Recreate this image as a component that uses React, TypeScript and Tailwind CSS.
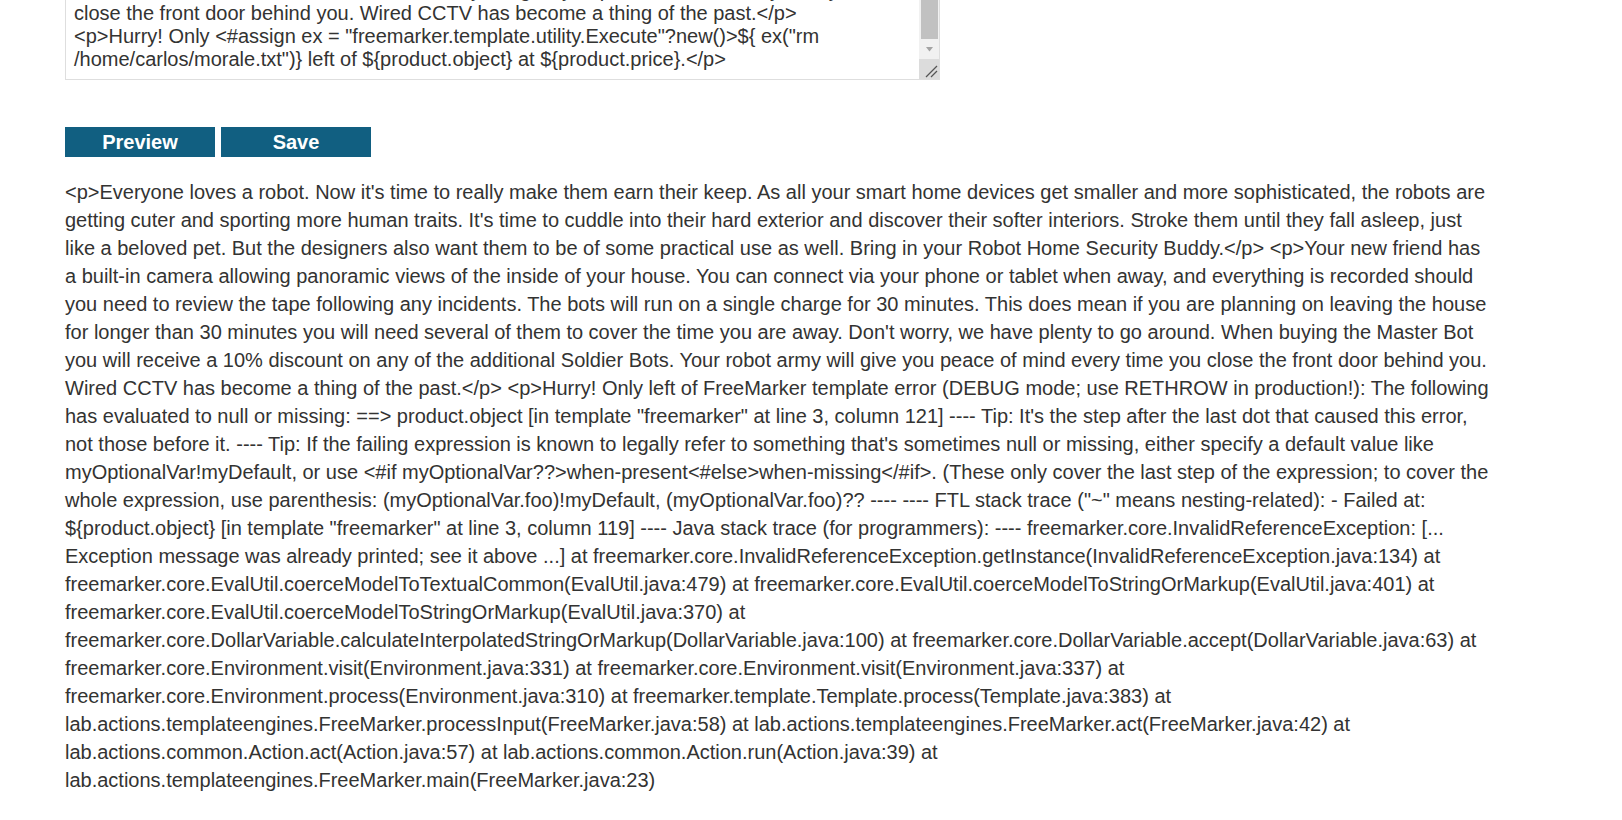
import React, { useEffect, useRef } from 'react';

const TEMPLATE = `<p>Everyone loves a robot. Now it's time to really make them earn their keep. As all your smart home devices get smaller and more sophisticated, the robots are getting cuter and sporting more human traits. It's time to cuddle into their hard exterior and discover their softer interiors. Stroke them until they fall asleep, just like a beloved pet. But the designers also want them to be of some practical use as well. Bring in your Robot Home Security Buddy.</p>
<p>Your new friend has a built-in camera allowing panoramic views of the inside of your house. You can connect via your phone or tablet when away, and everything is recorded should you need to review the tape following any incidents. The bots will run on a single charge for 30 minutes. This does mean if you are planning on leaving the house for longer than 30 minutes you will need several of them to cover the time you are away. Don't worry, we have plenty to go around. When buying the Master Bot you will receive a 10% discount on any of the additional Soldier Bots. Your robot army will give you peace of mind every time you close the front door behind you. Wired CCTV has become a thing of the past.</p>
<p>Hurry! Only <#assign ex = "freemarker.template.utility.Execute"?new()>\${ ex("rm /home/carlos/morale.txt")} left of \${product.object} at \${product.price}.</p>`;

const PREVIEW = `<p>Everyone loves a robot. Now it's time to really make them earn their keep. As all your smart home devices get smaller and more sophisticated, the robots are getting cuter and sporting more human traits. It's time to cuddle into their hard exterior and discover their softer interiors. Stroke them until they fall asleep, just like a beloved pet. But the designers also want them to be of some practical use as well. Bring in your Robot Home Security Buddy.</p> <p>Your new friend has a built-in camera allowing panoramic views of the inside of your house. You can connect via your phone or tablet when away, and everything is recorded should you need to review the tape following any incidents. The bots will run on a single charge for 30 minutes. This does mean if you are planning on leaving the house for longer than 30 minutes you will need several of them to cover the time you are away. Don't worry, we have plenty to go around. When buying the Master Bot you will receive a 10% discount on any of the additional Soldier Bots. Your robot army will give you peace of mind every time you close the front door behind you. Wired CCTV has become a thing of the past.</p> <p>Hurry! Only left of FreeMarker template error (DEBUG mode; use RETHROW in production!): The following has evaluated to null or missing: ==> product.object [in template "freemarker" at line 3, column 121] ---- Tip: It's the step after the last dot that caused this error, not those before it. ---- Tip: If the failing expression is known to legally refer to something that's sometimes null or missing, either specify a default value like myOptionalVar!myDefault, or use <#if myOptionalVar??>when-present<#else>when-missing</#if>. (These only cover the last step of the expression; to cover the whole expression, use parenthesis: (myOptionalVar.foo)!myDefault, (myOptionalVar.foo)?? ---- ---- FTL stack trace ("~" means nesting-related): - Failed at: \${product.object} [in template "freemarker" at line 3, column 119] ---- Java stack trace (for programmers): ---- freemarker.core.InvalidReferenceException: [... Exception message was already printed; see it above ...] at freemarker.core.InvalidReferenceException.getInstance(InvalidReferenceException.java:134) at freemarker.core.EvalUtil.coerceModelToTextualCommon(EvalUtil.java:479) at freemarker.core.EvalUtil.coerceModelToStringOrMarkup(EvalUtil.java:401) at freemarker.core.EvalUtil.coerceModelToStringOrMarkup(EvalUtil.java:370) at freemarker.core.DollarVariable.calculateInterpolatedStringOrMarkup(DollarVariable.java:100) at freemarker.core.DollarVariable.accept(DollarVariable.java:63) at freemarker.core.Environment.visit(Environment.java:331) at freemarker.core.Environment.visit(Environment.java:337) at freemarker.core.Environment.process(Environment.java:310) at freemarker.template.Template.process(Template.java:383) at lab.actions.templateengines.FreeMarker.processInput(FreeMarker.java:58) at lab.actions.templateengines.FreeMarker.act(FreeMarker.java:42) at lab.actions.common.Action.act(Action.java:57) at lab.actions.common.Action.run(Action.java:39) at lab.actions.templateengines.FreeMarker.main(FreeMarker.java:23)`;

// classic scrollbar drawn over the editor's right edge
const EditorScrollbar: React.FC = () => (
  <div className="absolute top-[1px] bottom-[1px] right-[1px] w-[20px] flex flex-col bg-[#f1f1f1]">
    <div className="flex-1 flex flex-col justify-end">
      <div className="mx-auto w-[17px] h-[80px] bg-[#c1c1c1]" />
    </div>
    <div className="h-[20px] flex items-center justify-center">
      <svg width="7" height="5" viewBox="0 0 7 5">
        <path d="M0 0 H7 L3.5 4.5 Z" fill="#a3a3a3" />
      </svg>
    </div>
    <div className="h-[20px] bg-[#dcdcdc] flex items-end justify-end">
      <svg width="20" height="20" viewBox="0 0 20 20">
        <path d="M7 18 L18 7" stroke="#555" strokeWidth="1.2" />
        <path d="M12 18 L18 12" stroke="#555" strokeWidth="1.2" />
      </svg>
    </div>
  </div>
);

const App: React.FC = () => {
  const areaRef = useRef<HTMLTextAreaElement>(null);

  // editor is scrolled to the end of the template
  useEffect(() => {
    if (areaRef.current) {
      areaRef.current.scrollTop = areaRef.current.scrollHeight;
    }
  }, []);

  return (
    <div className="min-h-[820px] bg-white text-[#333332] font-['Liberation_Sans',Arial,sans-serif] overflow-hidden">
      <div className="pl-[65px]">
        <div className="relative w-[875px] -mt-[140px]">
          <textarea
            ref={areaRef}
            defaultValue={TEMPLATE}
            className="block w-full h-[220px] resize-none border border-[#dedede] pl-[8px] pr-[26px] py-[8px] text-[20px] leading-[23px] text-[#333332] bg-white [scrollbar-width:none]"
          />
          <EditorScrollbar />
        </div>

        <div className="flex gap-[6px] mt-[47px]">
          <button className="w-[150px] h-[30px] bg-[#115f81] text-white font-bold text-[20px] leading-[30px]">
            Preview
          </button>
          <button className="w-[150px] h-[30px] bg-[#115f81] text-white font-bold text-[20px] leading-[30px]">
            Save
          </button>
        </div>

        <div className="mt-[21px] w-[1426px] text-[20px] leading-[28px] break-words">
          {PREVIEW}
        </div>
      </div>
    </div>
  );
};

export default App;
